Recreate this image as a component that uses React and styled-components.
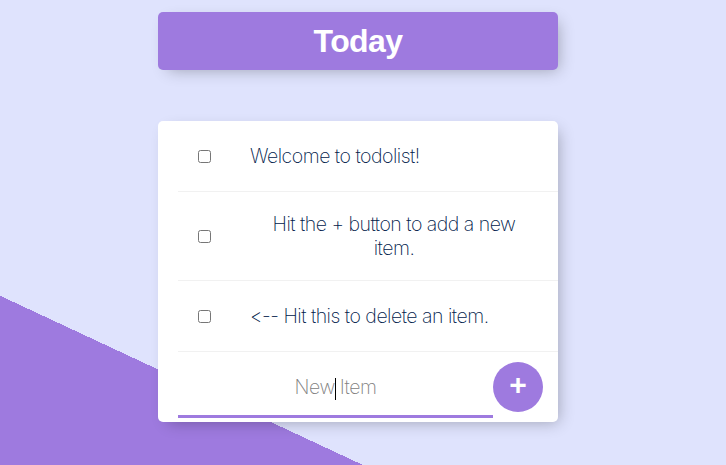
import React, { useState } from 'react';
import styled, { createGlobalStyle, keyframes } from 'styled-components';

const COLORS = {
  purple: '#9E7ADF',
  lavender: '#DFE3FD',
  ink: '#00204a',
  line: '#F1F1F1',
};

const GlobalStyle = createGlobalStyle`
  html, body {
    margin: 0;
    padding: 0;
  }
  body {
    font-family: 'Liberation Sans', Arial, sans-serif;
  }
  ::placeholder {
    color: grey;
    opacity: 1;
  }
`;

const blink = keyframes`
  0%, 49% { opacity: 1; }
  50%, 100% { opacity: 0; }
`;

const Page = styled.div`
  box-sizing: border-box;
  min-height: 930px;
  padding: 12px 10px 0 0;
  background-color: ${COLORS.lavender};
  background-image: linear-gradient(25deg, ${COLORS.purple} 50%, ${COLORS.lavender} 50%);
  text-align: center;
`;

const Box = styled.div`
  max-width: 400px;
  margin: 0 auto 51px auto;
  background: ${(props) => props.$bg || 'white'};
  border-radius: 5px;
  box-shadow: 5px 5px 15px -5px rgba(0, 0, 0, 0.3);
`;

const Heading = styled.h1`
  margin: 0;
  padding: 10px;
  color: #fff;
  font-family: 'Liberation Sans', Arial, sans-serif;
  font-weight: 700;
  font-size: 32px;
  line-height: 38px;
  letter-spacing: -0.6px;
`;

const Item = styled.div`
  min-height: 70px;
  display: flex;
  align-items: center;
  margin-left: 20px;
  border-bottom: 1px solid ${COLORS.line};
  &:last-child {
    border-bottom: 0;
  }
`;

const Check = styled.input`
  margin: 20px;
  width: 13px;
  height: 13px;
  flex-shrink: 0;
`;

const Text = styled.p`
  margin: 0;
  padding: 20px 20px 20px 19px;
  font-family: 'Inter', 'Liberation Sans', sans-serif;
  font-size: 19.5px;
  letter-spacing: -0.5px;
  line-height: 24px;
  font-weight: 200;
  color: ${COLORS.ink};
  text-decoration: ${(props) => (props.$done ? 'line-through' : 'none')};
  text-decoration-color: ${COLORS.purple};
`;

const Field = styled.div`
  position: relative;
  display: flex;
`;

const NewItemInput = styled.input`
  text-align: center;
  height: 60px;
  width: 313px;
  padding: 1px;
  border: none;
  background: transparent;
  font-family: 'Inter', 'Liberation Sans', sans-serif;
  font-size: 19.5px;
  letter-spacing: -0.5px;
  font-weight: 200;
  color: ${COLORS.ink};
  caret-color: ${(props) => (props.$empty ? 'transparent' : '#000')};
  &:focus {
    outline: none;
    box-shadow: inset 0 -3px 0 0 ${COLORS.purple};
  }
`;

const Caret = styled.span`
  position: absolute;
  left: 157px;
  top: 22px;
  width: 1px;
  height: 22px;
  background: #000;
  pointer-events: none;
  animation: ${blink} 1s step-end infinite;
`;

const AddButton = styled.button`
  min-height: 50px;
  width: 50px;
  border-radius: 50%;
  border: 0;
  background-color: ${COLORS.purple};
  color: #fff;
  font-family: 'Liberation Sans', Arial, sans-serif;
  font-weight: 700;
  font-size: 30px;
  padding: 0 0 4px 0;
  cursor: pointer;
`;

const items = [
  'Welcome to todolist!',
  'Hit the + button to add a new item.',
  '<-- Hit this to delete an item.',
];

const App = () => {
  const [done, setDone] = useState([false, false, false]);
  const [text, setText] = useState('');
  const [focused, setFocused] = useState(true);

  const toggle = (i) => setDone(done.map((d, j) => (j === i ? !d : d)));

  return (
    <Page>
      <GlobalStyle />
      <Box $bg={COLORS.purple}>
        <Heading>Today</Heading>
      </Box>
      <Box>
        {items.map((item, i) => (
          <Item key={item}>
            <Check type="checkbox" checked={done[i]} onChange={() => toggle(i)} />
            <Text $done={done[i]}>{item}</Text>
          </Item>
        ))}
        <Item as="form" onSubmit={(e) => e.preventDefault()}>
          <Field>
            <NewItemInput
              type="text"
              placeholder="New Item"
              autoFocus
              autoComplete="off"
              value={text}
              $empty={text === ''}
              onFocus={() => setFocused(true)}
              onBlur={() => setFocused(false)}
              onChange={(e) => setText(e.target.value)}
            />
            {focused && text === '' && <Caret />}
          </Field>
          <AddButton type="submit">+</AddButton>
        </Item>
      </Box>
    </Page>
  );
};

export default App;
